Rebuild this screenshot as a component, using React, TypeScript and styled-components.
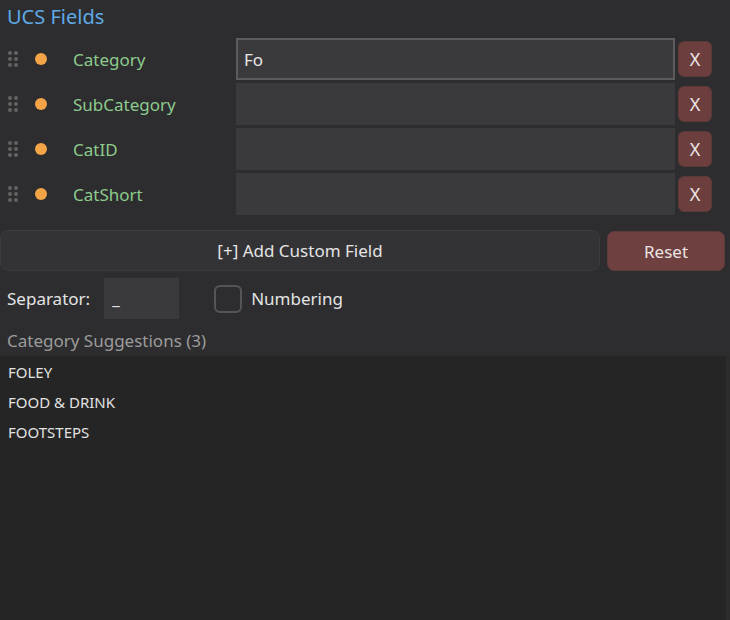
import React from "react";
import styled, { createGlobalStyle } from "styled-components";

const Global = createGlobalStyle`
  html, body { margin: 0; padding: 0; background: #2d2d2f; }
  body { font-family: "Segoe UI", "Noto Sans", "Open Sans", sans-serif; }
  * { box-sizing: border-box; }
`;

const Page = styled.div`
  width: 730px;
  height: 620px;
  background: #2d2d2f;
  display: flex;
  flex-direction: column;
  overflow: hidden;
`;

const Title = styled.div`
  height: 38px;
  padding: 2px 0 0 7px;
  font-size: 20px;
  line-height: 30px;
  color: #5ea9e6;
`;

const FieldList = styled.div`
  display: flex;
  flex-direction: column;
  gap: 3px;
`;

const FieldRow = styled.div`
  display: grid;
  grid-template-columns: 27px 38px 163px 439px 37px;
  align-items: center;
  height: 42px;
  padding-left: 8px;
`;

const Handle = styled.div`
  display: grid;
  grid-template-columns: 4px 4px;
  grid-auto-rows: 4px;
  gap: 2px;
  width: 10px;
`;

const Dot = styled.span`
  width: 4px;
  height: 4px;
  border-radius: 50%;
  background: #626262;
`;

const StatusDot = styled.span`
  width: 12px;
  height: 12px;
  border-radius: 50%;
  background: #f3a447;
`;

const Label = styled.span`
  font-size: 17px;
  color: #8ccb8c;
`;

const FieldInput = styled.div<{ $focused?: boolean }>`
  height: 42px;
  background: #3a3a3c;
  border: 2px solid ${(p) => (p.$focused ? "#5c5c5c" : "#3a3a3c")};
  display: flex;
  align-items: center;
  padding-left: 6px;
  font-size: 17px;
  color: #e6e6e6;
`;

const RemoveButton = styled.button`
  margin-left: 3px;
  width: 34px;
  height: 36px;
  border-radius: 6px;
  border: 1px solid #5a3939;
  background: #6d3e3e;
  color: #ece6e6;
  font-family: inherit;
  font-size: 18px;
  padding: 0;
  display: flex;
  align-items: center;
  justify-content: center;
`;

const ActionRow = styled.div`
  display: flex;
  gap: 7px;
  margin-top: 15px;
  padding-right: 5px;
  height: 41px;
`;

const AddButton = styled.button`
  flex: 0 0 600px;
  height: 41px;
  border-radius: 8px;
  border: 1px solid #3b3b3d;
  background: #333335;
  color: #e4e4e4;
  font-family: inherit;
  font-size: 17px;
`;

const ResetButton = styled.button`
  flex: 1;
  height: 40px;
  margin-top: 1px;
  border-radius: 7px;
  border: 1px solid #5d3a3a;
  background: #6e4040;
  color: #ece4e4;
  font-family: inherit;
  font-size: 17px;
`;

const OptionsRow = styled.div`
  display: flex;
  align-items: center;
  margin-top: 7px;
  height: 41px;
  padding-left: 7px;
`;

const OptionLabel = styled.span`
  font-size: 17px;
  color: #e4e4e4;
`;

const SeparatorBox = styled.div`
  margin-left: 14px;
  width: 75px;
  height: 41px;
  background: #3a3a3c;
  color: #e4e4e4;
  font-size: 17px;
  padding: 9px 0 0 8px;
`;

const Checkbox = styled.span`
  margin-left: 35px;
  margin-right: 9px;
  width: 28px;
  height: 28px;
  border-radius: 6px;
  border: 2px solid #555557;
`;

const SectionHeading = styled.div`
  margin-top: 3px;
  height: 34px;
  padding-left: 7px;
  font-size: 17px;
  line-height: 38px;
  color: #9c9c9c;
  overflow: hidden;
`;

const SuggestionPanel = styled.div`
  flex: 1;
  display: flex;
  background: #252525;
`;

const SuggestionList = styled.ul`
  flex: 1;
  list-style: none;
  margin: 0;
  padding: 1px 0 0 0;
`;

const Suggestion = styled.li`
  height: 30px;
  line-height: 30px;
  padding-left: 8px;
  font-size: 15px;
  color: #e2e2e2;
`;

const ScrollTrack = styled.div`
  width: 4px;
  background: #2c2c2c;
`;

const fields = ["Category", "SubCategory", "CatID", "CatShort"];
const suggestions = ["FOLEY", "FOOD & DRINK", "FOOTSTEPS"];

export default function App() {
  return (
    <Page>
      <Global />
      <Title>UCS Fields</Title>
      <FieldList>
        {fields.map((f, i) => (
          <FieldRow key={f}>
            <Handle>
              {Array.from({ length: 6 }).map((_, j) => (
                <Dot key={j} />
              ))}
            </Handle>
            <StatusDot />
            <Label>{f}</Label>
            <FieldInput $focused={i === 0}>{i === 0 ? "Fo" : ""}</FieldInput>
            <RemoveButton>X</RemoveButton>
          </FieldRow>
        ))}
      </FieldList>
      <ActionRow>
        <AddButton>[+] Add Custom Field</AddButton>
        <ResetButton>Reset</ResetButton>
      </ActionRow>
      <OptionsRow>
        <OptionLabel>Separator:</OptionLabel>
        <SeparatorBox>_</SeparatorBox>
        <Checkbox />
        <OptionLabel>Numbering</OptionLabel>
      </OptionsRow>
      <SectionHeading>Category Suggestions (3)</SectionHeading>
      <SuggestionPanel>
        <SuggestionList>
          {suggestions.map((s) => (
            <Suggestion key={s}>{s}</Suggestion>
          ))}
        </SuggestionList>
        <ScrollTrack />
      </SuggestionPanel>
    </Page>
  );
}
